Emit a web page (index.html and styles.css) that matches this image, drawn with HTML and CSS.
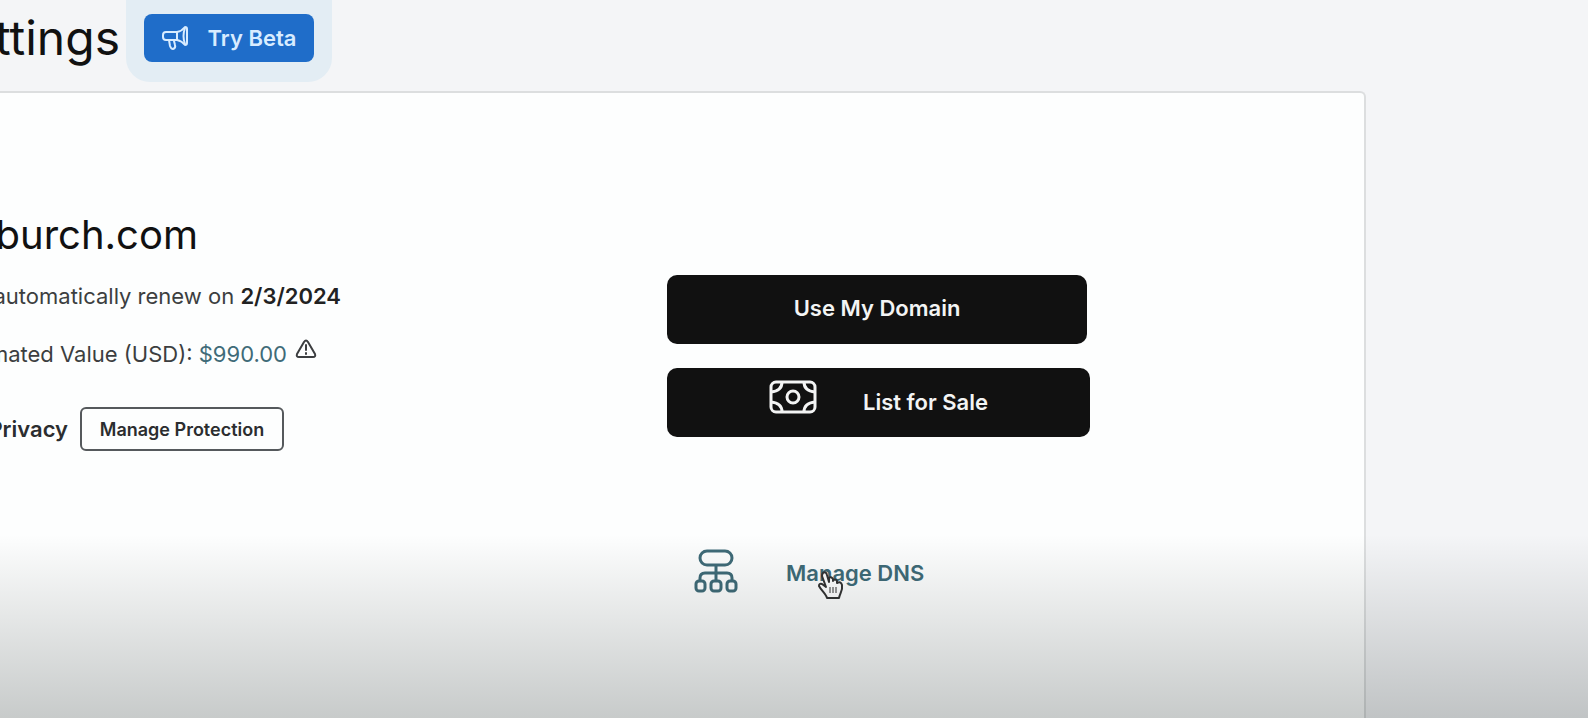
FILE: index.html
```
<!DOCTYPE html>
<html lang="en">
<head>
  <meta charset="UTF-8" />
  <meta name="viewport" content="width=device-width, initial-scale=1.0" />
  <title>Domain Settings</title>
  <link rel="stylesheet" href="styles.css">
</head>
<body>
  <header>
    <h1>ttings</h1>
    <div class="beta">
      <button class="btn-beta" type="button">
        <svg width="26" height="24" viewBox="0 0 26 24" fill="none" stroke="currentColor" stroke-width="2" stroke-linejoin="round" stroke-linecap="round">
          <path d="M15 6H4Q1 6 1 9V11Q1 14 4 14H15Z" />
          <path d="M15 6Q20 5 23 1Q25 1 25 3V17Q25 19 23 19Q20 15 15 14" />
          <path d="M23 2Q20 10 23 18M7 14L8 20Q9 23 11 23Q14 22 13 19L12 15" />
        </svg>
        <span>Try Beta</span>
      </button>
    </div>
  </header>

  <main class="card">
    <section class="details">
      <h2>burch.com</h2>
      <p class="line"><span>automatically renew on <strong>2/3/2024</strong></span></p>
      <p class="line">
        <span>mated Value (USD): <a href="#">$990.00</a></span>
        <svg width="22" height="20" viewBox="0 0 22 20" fill="none" stroke="currentColor" stroke-width="2" stroke-linejoin="round" stroke-linecap="round">
          <path d="M9 3Q11 0 13 3L20 15Q21 18 18 18H4Q1 18 2 15Z" />
          <path d="M11 6V11M11 14V15" />
        </svg>
      </p>
      <div class="privacy">
        <strong>Privacy</strong>
        <button class="btn-outline" type="button">Manage Protection</button>
      </div>
    </section>

    <section class="actions">
      <button class="btn-dark" type="button">Use My Domain</button>
      <button class="btn-dark btn-sale" type="button">
        <svg width="48" height="34" viewBox="0 0 48 34" fill="none" stroke="currentColor" stroke-width="3">
          <rect x="2" y="2" width="44" height="30" rx="5" />
          <circle cx="24" cy="17" r="6" />
          <path d="M13 2Q13 11 2 12M35 2Q35 11 46 12M13 32Q13 23 2 22M35 32Q35 23 46 22" />
        </svg>
        <span>List for Sale</span>
      </button>
      <a class="dns" href="#">
        <svg width="44" height="44" viewBox="0 0 44 44" fill="none" stroke="currentColor" stroke-width="3">
          <rect x="6" y="2" width="32" height="14" rx="7" />
          <path d="M22 16V32M6 32V29Q6 24 11 24H33Q38 24 38 29V32" />
          <rect x="2" y="32" width="9" height="10" rx="3" />
          <rect x="17" y="32" width="10" height="10" rx="3" />
          <rect x="33" y="32" width="9" height="10" rx="3" />
        </svg>
        <span class="dns-label">Manage DNS
          <svg class="pointer" width="26" height="30" viewBox="0 0 26 30" fill="#fff" stroke="#333" stroke-width="2" stroke-linejoin="round">
            <path d="M5 3Q8 1 9 5L11 12V8Q13 6 15 9V11Q17 8 19 11V13Q23 11 24 15C25 20 22 23 21 28H9C8 24 3 20 1 16Q1 13 4 14L8 17L4 6Q4 4 5 3Z" />
            <path d="M12 17V23M15 17V23M18 17V23" stroke-width="1" />
          </svg>
        </span>
      </a>
    </section>
  </main>
  <div class="shade"></div>
</body>
</html>
```

FILE: styles.css
```
* {
  box-sizing: border-box;
}
body {
  display: flex;
  flex-direction: column;
  position: relative;
  min-height: 100vh;
  margin: 0;
  overflow-x: hidden;
  background: #f4f5f7;
  color: #111;
  font-family: Inter, "Liberation Sans", sans-serif;
  font-size: 22px;
}
h1, h2, p {
  margin: 0;
  font-weight: 400;
  white-space: nowrap;
}
strong {
  font-weight: 600;
}
a {
  color: #3f6b78;
  text-decoration: none;
}
button {
  font-family: inherit;
  font-weight: 600;
  cursor: pointer;
}
svg {
  flex-shrink: 0;
}
header {
  display: flex;
  align-items: flex-start;
  height: 91px;
}
h1 {
  display: flex;
  justify-content: flex-end;
  width: 120px;
  margin-right: 6px;
  padding-top: 8px;
  font-size: 48px;
  line-height: 60px;
}
.beta {
  padding: 14px 18px 20px;
  border-radius: 0 0 24px 24px;
  background: #e3edf4;
}
.btn-beta {
  display: flex;
  align-items: center;
  justify-content: center;
  gap: 20px;
  width: 170px;
  height: 48px;
  padding: 0;
  border: none;
  border-radius: 8px;
  background: #1f6dc9;
  color: #d8ecff;
  font-size: 22px;
}
.card {
  display: grid;
  grid-template-columns: 667px 1fr;
  flex: 1;
  margin-right: 222px;
  border: 2px solid #dcdedf;
  border-left: none;
  border-bottom: none;
  border-radius: 0 6px 0 0;
  background: #fdfefe;
}
.details {
  padding-top: 116px;
}
h2 {
  display: flex;
  justify-content: flex-end;
  width: 198px;
  margin-bottom: 20px;
  font-size: 40px;
  line-height: 52px;
}
.line {
  display: flex;
  align-items: flex-start;
  justify-content: flex-end;
  gap: 8px;
  width: 341px;
  margin-bottom: 28px;
  color: #3c3e40;
  line-height: 30px;
}
.line + .line {
  width: 317px;
  margin-bottom: 38px;
}
.line strong {
  color: #222;
}
.privacy {
  display: flex;
  align-items: center;
  justify-content: flex-end;
  gap: 12px;
  width: 284px;
  color: #2b2d2f;
}
.btn-outline {
  flex-shrink: 0;
  width: 204px;
  height: 44px;
  padding: 0;
  border: 2px solid #55595c;
  border-radius: 6px;
  background: none;
  color: #2b2d2f;
  font-size: 18px;
}
.actions {
  display: flex;
  flex-direction: column;
  align-items: flex-start;
  gap: 24px;
  padding-top: 182px;
}
.btn-dark {
  width: 420px;
  height: 69px;
  padding: 0 0 4px;
  border: none;
  border-radius: 10px;
  background: #111;
  color: #f3f4f4;
  font-size: 22px;
}
.btn-sale {
  display: flex;
  align-items: flex-start;
  justify-content: center;
  gap: 46px;
  width: 423px;
  padding: 12px 0 0;
}
.btn-sale span {
  line-height: 44px;
}
.dns {
  display: flex;
  align-items: center;
  gap: 48px;
  margin: 88px 0 0 27px;
  font-weight: 600;
}
.dns-label {
  position: relative;
  padding-top: 4px;
}
/* hand cursor resting on the link */
.pointer {
  position: absolute;
  top: 14px;
  left: 32px;
}
/* darkening towards the bottom edge */
.shade {
  position: absolute;
  right: 0;
  bottom: 0;
  left: 0;
  height: 184px;
  background: linear-gradient(transparent, rgba(0, 12, 10, 0.21));
  pointer-events: none;
}
```
